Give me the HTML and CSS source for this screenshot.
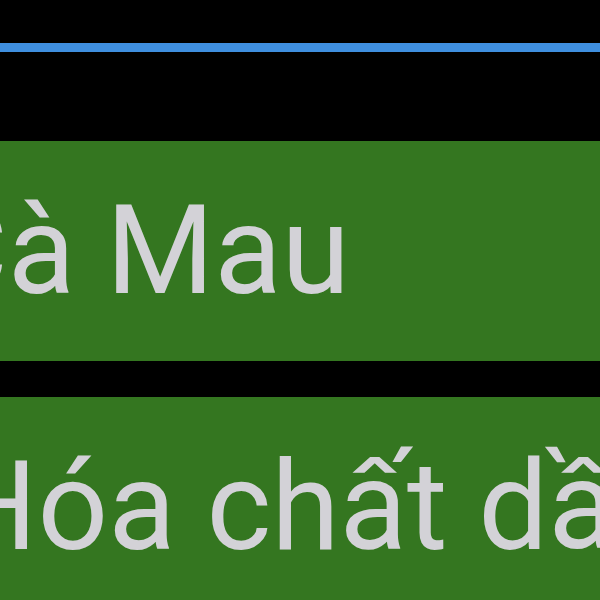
FILE: index.html
```html
<!DOCTYPE html>
<html lang="vi">
<head>
<meta charset="utf-8">
<link rel="stylesheet" href="styles.css">
</head>
<body>
<div class="screen">
  <div class="topbar"></div>
  <ul class="list">
    <li class="item item-first"><span class="label">Cà Mau</span></li>
    <li class="item item-second"><span class="label">Hóa chất dầu khí</span></li>
  </ul>
</div>
</body>
</html>
```
FILE: styles.css
```css
html, body {
  margin: 0;
  padding: 0;
  background: #000;
}
.screen {
  width: 600px;
  height: 600px;
  overflow: hidden;
  background: #000;
  padding-top: 43px;
  box-sizing: border-box;
}
.topbar {
  height: 9px;
  background: #3f8fdf;
}
.list {
  list-style: none;
  margin: 89px 0 0 0;
  padding: 0;
  display: flex;
  flex-direction: column;
  gap: 36px;
}
.item {
  height: 220px;
  background: #347620;
  font-family: Roboto, "Noto Sans", sans-serif;
  font-size: 124px;
  line-height: 220px;
  color: #d3d2d7;
  white-space: nowrap;
  overflow: hidden;
}
.item-first .label {
  display: block;
  margin-left: -73px;
}
.item-second .label {
  display: block;
  margin-left: -51px;
}
```
